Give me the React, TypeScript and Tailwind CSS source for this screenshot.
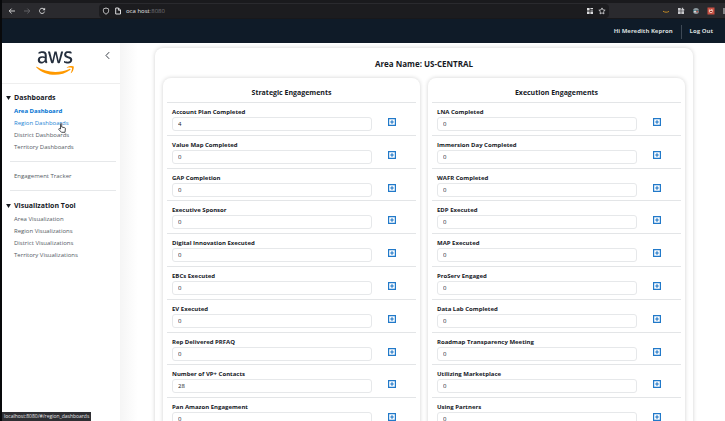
import { ReactNode } from "react";

const strategic: [string, string][] = [
  ["Account Plan Completed", "4"],
  ["Value Map Completed", "0"],
  ["GAP Completion", "0"],
  ["Executive Sponsor", "0"],
  ["Digital Innovation Executed", "0"],
  ["EBCs Executed", "0"],
  ["EV Executed", "0"],
  ["Rep Delivered PRFAQ", "0"],
  ["Number of VP+ Contacts", "28"],
  ["Pan Amazon Engagement", "0"],
];

const execution: [string, string][] = [
  ["LNA Completed", "0"],
  ["Immersion Day Completed", "0"],
  ["WAFR Completed", "0"],
  ["EDP Executed", "0"],
  ["MAP Executed", "0"],
  ["ProServ Engaged", "0"],
  ["Data Lab Completed", "0"],
  ["Roadmap Transparency Meeting", "0"],
  ["Utilizing Marketplace", "0"],
  ["Using Partners", "0"],
];

function BrowserBar() {
  return (
    <div className="flex h-[19px] shrink-0 items-center border-t-[3px] border-b border-t-[#1a1a1d] border-b-[#18181b] bg-[#2a2a2e] pl-[6px] text-[#dcdcde]">
      <button aria-label="Back" className="w-[8px]">
        <svg viewBox="0 0 8 8" className="block size-[8px]" fill="none" stroke="currentColor" strokeWidth="0.9"><path d="M7 4H1.2M3.6 1.6L1.2 4l2.4 2.4" /></svg>
      </button>
      <button aria-label="Forward" className="ml-[7px] w-[8px] text-[#68686c]">
        <svg viewBox="0 0 8 8" className="block size-[8px]" fill="none" stroke="currentColor" strokeWidth="0.9"><path d="M1 4h5.8M4.4 1.6L6.8 4 4.4 6.4" /></svg>
      </button>
      <button aria-label="Reload" className="ml-[7px] w-[8px]">
        <svg viewBox="0 0 8 8" className="block size-[8px]" fill="none" stroke="currentColor" strokeWidth="0.9"><path d="M6.6 4.6A2.6 2.6 0 1 1 6 2.1" /><path d="M7.1 0.7v2.6H4.5z" fill="currentColor" stroke="none" /></svg>
      </button>
      <div className="ml-[53px] flex h-[14px] grow items-center rounded-sm bg-[#1c1c1f] px-[3px]">
        <svg viewBox="0 0 8 8" className="size-[8px]" fill="none" stroke="currentColor" strokeWidth="0.9"><path d="M4 1c.8.500 1.500.400 2.300.700.700 1.800.500 4.400-2.300 5.400C1.200 6.100 1 3.500 1.700 1.700 2.500 1.400 3.200 1.500 4 1z" /></svg>
        <svg viewBox="0 0 8 8" className="ml-1 size-[8px]" fill="none" stroke="currentColor" strokeWidth="1"><path d="M1.700 1h2.800l2 2v4H1.700zM4.400 1v2.200h2" /></svg>
        <span className="ml-[4px] grow text-[6px] leading-[8px] text-[#e4e4e6]">
          oca host<span className="text-[#77777b]">:8080</span>
        </span>
        <svg viewBox="0 0 8 8" className="size-[8px]" fill="currentColor"><path d="M1 1h2.600v2.600H1zM4.400 1H7v1.100H4.400zM4.400 2.700H7v.9H4.400zM1 4.400h2.600V7H1zM4.400 4.400H7V7H4.400z" /></svg>
        <svg viewBox="0 0 8 8" className="ml-1 size-[8px]" fill="none" stroke="currentColor" strokeWidth="0.8"><path d="M4 .9l.95 2 2.200.3-1.600 1.500.4 2.200L4 5.850 2.050 6.900l.4-2.200L.85 3.200l2.200-.3z" /></svg>
      </div>
      <div className="ml-[53px] flex items-center gap-[7px]">
        <svg viewBox="0 0 8 8" className="size-[8px]" fill="none" stroke="#c28a24" strokeWidth="1"><path d="M1 4.200c2 1.300 4.200 1.300 6 .2" /></svg>
        <svg viewBox="0 0 8 8" className="size-[8px]" fill="#c8c8cb"><path d="M1 1h2.700v2.700H1zM4.800.8h1.400v1.100h1v1.800H4.300V1.900h.5zM1 4.300h2.700V7H1zM4.300 4.300H7V7H4.300z" /></svg>
        <svg viewBox="0 0 8 8" className="size-[8px]"><circle cx="4" cy="4" r="3" fill="#8b989e" /><path d="M1 3h6v1.400H1z" fill="#366d78" /><circle cx="3" cy="4.500" r="1" fill="#e6e0dc" /><circle cx="5.300" cy="4.500" r="1" fill="#b8544b" /></svg>
        <svg viewBox="0 0 8 8" className="size-[8px]"><rect x="0.500" y="0.500" width="7" height="7" fill="#c94f42" /><path d="M2 2.200l1.500.8L5 1.800l1 2-1 2.300H3L1.800 4.300z" fill="#efc2b2" /><path d="M3 4h2v1H3z" fill="#8f3028" /></svg>
        <svg viewBox="0 0 3 8" className="h-[8px] w-[3px]" stroke="#dcdcde"><path d="M1 2h2M1 4h2M1 6h2" /></svg>
      </div>
    </div>
  );
}

function Link({ children, tone = "text-[#545b64]" }: { children: ReactNode; tone?: string }) {
  return (
    <li>
      <a href="#" className={`block leading-[12px] ${tone}`}>{children}</a>
    </li>
  );
}

function Section({ title, children }: { title: string; children: ReactNode }) {
  return (
    <section>
      <h2 className="flex items-center gap-[3px] text-[7px] leading-[14px] font-bold text-[#16191f]">
        <svg viewBox="0 0 6 5" className="h-[4px] w-[5px]"><path d="M0 0h6L3 5z" fill="#16191f" /></svg>
        {title}
      </h2>
      <ul className="pl-2 text-[6px]">{children}</ul>
    </section>
  );
}

function Sidebar() {
  return (
    <aside className="relative w-[118px] shrink-0 bg-white">
      <div className="flex h-[41px] items-start justify-between border-b border-[#eeeeee] pt-[8px] pr-[10px] pl-[34px]">
        <svg viewBox="0 0 304 182" className="h-[24px] w-[38px]" preserveAspectRatio="none" aria-label="aws">
          <path fill="#252f3e" d="M86.400 66.400c0 3.700.4 6.700 1.100 8.900.8 2.200 1.800 4.600 3.200 7.200.5.8.7 1.600.7 2.300 0 1-.6 2-1.900 3l-6.300 4.200c-.9.6-1.800.9-2.600.9-1 0-2-.5-3-1.400-1.400-1.500-2.600-3.100-3.600-4.700-1-1.700-2-3.600-3.100-5.900-7.800 9.200-17.600 13.800-29.400 13.800-8.400 0-15.100-2.400-20-7.200-4.900-4.800-7.400-11.200-7.400-19.200 0-8.500 3-15.400 9.100-20.600 6.100-5.200 14.200-7.800 24.500-7.800 3.400 0 6.900.3 10.600.8 3.700.5 7.500 1.300 11.500 2.200v-7.300c0-7.600-1.600-12.900-4.700-16-3.200-3.100-8.600-4.600-16.300-4.600-3.500 0-7.100.4-10.800 1.300-3.700.9-7.300 2-10.800 3.400-1.600.7-2.800 1.100-3.500 1.300-.7.2-1.200.3-1.600.3-1.400 0-2.100-1-2.100-3.100v-4.900c0-1.600.2-2.800.7-3.500.5-.7 1.400-1.400 2.800-2.100 3.500-1.800 7.700-3.300 12.600-4.500C41 1.900 46.200 1.300 51.700 1.300c11.900 0 20.600 2.700 26.200 8.100 5.500 5.400 8.300 13.600 8.300 24.600v32.400zM45.800 81.600c3.300 0 6.700-.6 10.300-1.800 3.600-1.200 6.800-3.400 9.500-6.400 1.600-1.900 2.800-4 3.400-6.400.6-2.400 1-5.300 1-8.700v-4.200c-2.900-.7-6-1.300-9.200-1.700-3.200-.4-6.300-.6-9.400-.6-6.700 0-11.600 1.300-14.900 4-3.300 2.700-4.900 6.500-4.900 11.500 0 4.700 1.200 8.200 3.700 10.600 2.400 2.500 5.900 3.700 10.500 3.700zM126.100 92.400c-1.800 0-3-.3-3.800-1-.8-.6-1.500-2-2.100-3.900L96.700 10.200c-.6-2-.9-3.300-.9-4 0-1.600.8-2.500 2.400-2.500h9.800c1.900 0 3.200.3 3.900 1 .8.6 1.400 2 2 3.900l16.800 66.200 15.600-66.200c.5-2 1.100-3.300 1.900-3.900.8-.6 2.200-1 4-1h8c1.900 0 3.200.3 4 1 .8.6 1.500 2 1.900 3.900l15.800 67 17.300-67c.6-2 1.300-3.300 2-3.900.8-.6 2.100-1 3.900-1h9.300c1.600 0 2.500.8 2.500 2.500 0 .5-.1 1-.2 1.600-.1.6-.3 1.400-.7 2.500l-24.100 77.300c-.6 2-1.300 3.300-2.100 3.900-.8.600-2.100 1-3.800 1h-8.600c-1.900 0-3.200-.3-4-1-.8-.7-1.500-2-1.900-4L156 23l-15.400 64.400c-.5 2-1.100 3.300-1.900 4-.8.7-2.200 1-4 1zM254.600 95.100c-5.200 0-10.400-.6-15.400-1.800-5-1.200-8.900-2.500-11.500-4-1.600-.9-2.700-1.900-3.100-2.800-.4-.9-.6-1.900-.6-2.800v-5.100c0-2.100.8-3.100 2.300-3.100.6 0 1.200.1 1.800.3.6.2 1.500.6 2.500 1 3.400 1.500 7.100 2.700 11 3.500 4 .8 7.900 1.200 11.900 1.200 6.300 0 11.200-1.100 14.600-3.300 3.400-2.200 5.200-5.400 5.200-9.500 0-2.800-.9-5.100-2.700-7-1.800-1.900-5.200-3.600-10.100-5.200L246 52c-7.300-2.300-12.700-5.700-16-10.200-3.300-4.400-5-9.300-5-14.500 0-4.200.9-7.900 2.700-11.100 1.800-3.200 4.200-6 7.200-8.200 3-2.300 6.400-4 10.400-5.200 4-1.200 8.200-1.700 12.600-1.700 2.200 0 4.500.1 6.700.4 2.300.3 4.400.7 6.500 1.100 2 .5 3.900 1 5.700 1.600 1.800.6 3.200 1.200 4.200 1.800 1.400.8 2.400 1.600 3 2.500.6.800.9 1.900.9 3.300v4.700c0 2.100-.8 3.200-2.300 3.200-.8 0-2.100-.4-3.800-1.200-5.700-2.600-12.100-3.900-19.200-3.900-5.700 0-10.200.9-13.300 2.800-3.100 1.900-4.700 4.800-4.700 8.900 0 2.800 1 5.200 3 7.100 2 1.900 5.700 3.800 11 5.500l14.200 4.500c7.200 2.300 12.400 5.500 15.500 9.600 3.100 4.100 4.600 8.800 4.600 14 0 4.300-.9 8.200-2.600 11.600-1.800 3.400-4.200 6.400-7.300 8.800-3.100 2.500-6.800 4.300-11.100 5.600-4.500 1.400-9.200 2.100-14.300 2.100z" />
          <path fill="#ff9900" d="M273.500 143.700c-32.900 24.300-80.700 37.200-121.800 37.200-57.600 0-109.500-21.300-148.700-56.700-3.100-2.800-.3-6.600 3.400-4.400 42.400 24.600 94.700 39.500 148.800 39.500 36.500 0 76.600-7.600 113.500-23.200 5.500-2.500 10.200 3.600 4.800 7.600zM287.200 128.100c-4.200-5.400-27.800-2.600-38.500-1.300-3.200.4-3.700-2.400-.8-4.500 18.800-13.200 49.700-9.400 53.300-5 3.600 4.500-1 35.400-18.600 50.200-2.700 2.300-5.300 1.100-4.100-1.900 4-9.900 12.900-32.200 8.700-37.500z" />
        </svg>
        <button aria-label="Collapse menu">
          <svg viewBox="0 0 6 10" className="h-[9px] w-[5px]" fill="none" stroke="#3a4049" strokeWidth="1.200"><path d="M5 1L1.200 5 5 9" /></svg>
        </button>
      </div>
      <nav className="pt-[7px] pr-1 pl-1">
        <Section title="Dashboards">
          <Link tone="font-bold text-[#0073d2]">Area Dashboard</Link>
          <Link tone="text-[#2585d5]">Region Dashboards</Link>
          <Link>District Dashboards</Link>
          <Link>Territory Dashboards</Link>
        </Section>
        <ul className="my-[8px] ml-1 border-y border-[#e6e8ea] py-[8px] pl-1 text-[6px]">
          <Link>Engagement Tracker</Link>
        </ul>
        <Section title="Visualization Tool">
          <Link>Area Visualization</Link>
          <Link>Region Visualizations</Link>
          <Link>District Visualizations</Link>
          <Link>Territory Visualizations</Link>
        </Section>
      </nav>
      <svg viewBox="0 0 8 10" className="absolute top-[80px] left-[56px] h-[10px] w-[8px]" fill="white" stroke="#22262b" strokeWidth="0.800"><path d="M2.500 6V1.200c0-.9 1.200-.9 1.200 0V4l3 .7c.6.200.8.600.7 1.100L7 9.300H3.500L.8 6.500c-.4-.8.5-1.200 1-.8z" /></svg>
    </aside>
  );
}

function Engagements({ id, title, rows }: { id: string; title: string; rows: [string, string][] }) {
  return (
    <section className="flex-1 rounded-lg bg-white px-1 shadow-[0_0_4px_rgba(0,0,0,0.18)]">
      <h2 className="border-b border-[#e3e5e7] pt-[9px] pb-[3px] text-center text-[7px] leading-[12px] font-bold">{title}</h2>
      <div className="grid h-[328px] grid-rows-10">
        {rows.map(([label, value], i) => (
          <div key={label} className="flex justify-between border-b border-[#e3e5e7] pr-[20px] pl-[5px]">
            <div className="w-[200px]">
              <label htmlFor={`${id}-${i}`} className="block pt-[4px] text-[6px] leading-[10px] font-bold">{label}</label>
              <input id={`${id}-${i}`} defaultValue={value} className="block h-[14px] w-full rounded-[3px] border border-[#e6e8ea] bg-white px-[5px] text-[6px] leading-[12px] text-[#16191f]" />
            </div>
            <button aria-label={`Add ${label}`} className="mt-[15px] size-[8px]">
              <svg viewBox="0 0 8 8" className="block size-[8px]" fill="none" stroke="#2179c9" strokeWidth="1.200"><path d="M.6.6h6.800v6.800H.6zM4 2.200v3.600M2.200 4h3.600" /></svg>
            </button>
          </div>
        ))}
      </div>
    </section>
  );
}

export default function App() {
  return (
    <div className="flex h-screen flex-col overflow-hidden border-l-2 border-[#08090b] bg-white font-['Open_Sans','Noto_Sans',sans-serif] text-[#16191f]">
      <BrowserBar />
      <header className="flex h-[24px] shrink-0 items-center justify-end bg-[#0f1b28] pt-px pr-3 text-[6px] font-bold text-[#d5dbdb]">
        <span>Hi Meredith Kepron</span>
        <span className="mx-2 h-[14px] w-px bg-[#3d4855]" />
        <button>Log Out</button>
      </header>
      <div className="flex min-h-0 flex-1">
        <Sidebar />
        <main className="min-w-0 flex-1 bg-linear-to-r from-[#f5f5f5] to-white to-[18px] pt-[5px] pr-8 pl-[35px]">
          <div className="rounded-lg bg-white px-2 pb-4 shadow-[0_0_4px_rgba(0,0,0,0.18)]">
            <h1 className="pt-[9px] pb-[7px] text-center text-[8px] leading-[14px] font-bold">Area Name: US-CENTRAL</h1>
            <div className="flex gap-2">
              <Engagements id="strategic" title="Strategic Engagements" rows={strategic} />
              <Engagements id="execution" title="Execution Engagements" rows={execution} />
            </div>
          </div>
        </main>
      </div>
      <div className="fixed bottom-0 left-[2px] bg-[#2f2f33] px-[2px] text-[5px] leading-[9px] text-[#e4e4e6]">localhost:8080/#/region_dashboards</div>
    </div>
  );
}
